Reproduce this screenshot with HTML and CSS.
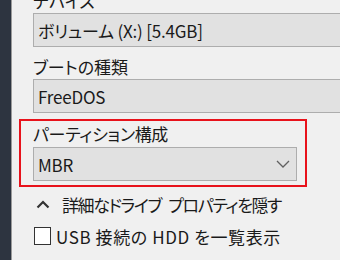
FILE: index.html
```html
<!DOCTYPE html>
<html lang="ja">
<head>
    <meta charset="UTF-8">
    <title>ドライブ プロパティ</title>
    <link rel="stylesheet" href="styles.css">
</head>
<body>
    <div class="sidebar"></div>
    <div class="panel">
        <div class="group">
            <div class="label">デバイス</div>
            <div class="field wide">ボリューム (X:) [5.4GB]</div>
        </div>
        <div class="group">
            <div class="label">ブートの種類</div>
            <div class="field wide">FreeDOS</div>
        </div>
        <div class="group highlight">
            <div class="label">パーティション構成</div>
            <div class="field combo">
                <span>MBR</span>
                <svg class="arrow" width="14" height="8" viewBox="0 0 14 8">
                    <path d="M1 1 L7 7 L13 1" fill="none" stroke="#606060" stroke-width="1.3"/>
                </svg>
            </div>
        </div>
        <div class="toggle">
            <svg class="chevron" width="14" height="9" viewBox="0 0 14 9">
                <path d="M1.5 7.5 L7 2 L12.5 7.5" fill="none" stroke="#333" stroke-width="2.2"/>
            </svg>
            <span>詳細なドライブ プロパティを隠す</span>
        </div>
        <label class="check">
            <span class="box"></span>
            <span>USB 接続の HDD を一覧表示</span>
        </label>
    </div>
</body>
</html>
```

FILE: styles.css
```css
body {
    margin: 0;
    display: flex;
    height: 260px;
    overflow: hidden;
    background: #f0f0f0;
    color: #1a1a1a;
    font-family: "Noto Sans CJK JP", "Noto Sans", sans-serif;
    font-size: 17px;
    font-feature-settings: "palt";
}
.sidebar { width: 11px; flex: none; background: #2d3440; border-right: 1px solid #9a9a9a; }
.panel { flex: 1; padding-left: 7px; margin-top: -13px; min-width: 0; overflow: hidden; }

.group { border: 2px solid transparent; padding: 0 0 0 12px; margin-bottom: 4px; }
.group + .group { margin-top: 4px; }
.label { line-height: 24px; height: 24px; }

.field {
    height: 32px;
    display: flex;
    align-items: center;
    padding: 0 4px;
    background: #e1e1e1;
    border: 1px solid #adadad;
    letter-spacing: -0.2px;
}
.wide { width: 400px; }

.highlight {
    width: 264px;
    border-color: #e8121b;
    padding: 1px 8px 4px 12px;
    margin-top: 4px;
}
.highlight .label { margin-bottom: 1px; letter-spacing: -0.3px; }
.combo { justify-content: space-between; padding-right: 6px; }
.arrow { display: block; }

.toggle {
    display: flex;
    align-items: center;
    height: 24px;
    margin-top: 5px;
    padding-left: 17px;
    letter-spacing: -1.4px;
    word-spacing: 5px;
}
.chevron { display: block; margin-right: 12px; }

.check {
    display: flex;
    align-items: center;
    height: 24px;
    margin-top: 8px;
    padding-left: 15px;
    letter-spacing: 0.6px;
}
.box {
    width: 15px;
    height: 16px;
    border: 1.5px solid #333;
    background: #fff;
    margin-right: 5px;
}
```
